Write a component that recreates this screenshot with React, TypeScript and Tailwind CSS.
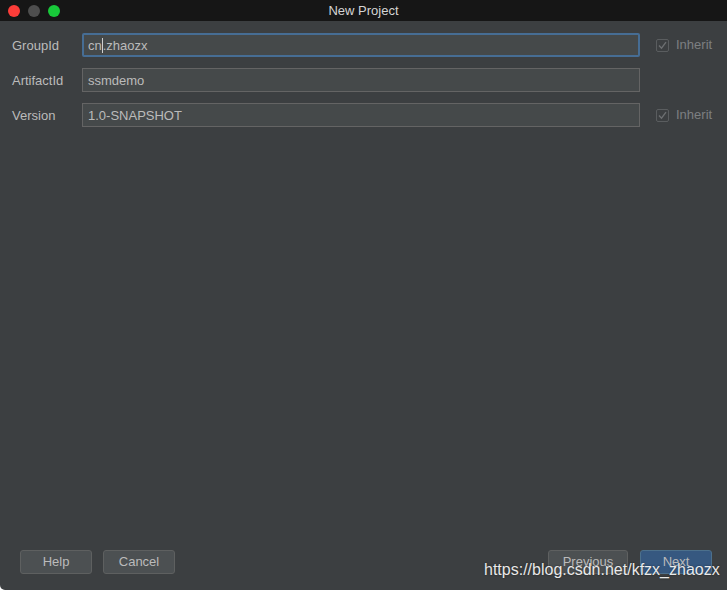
import React from "react";

function Inherit({ show }: { show: boolean }) {
  return (
    <div className="w-[87px] pl-4 flex items-center gap-[7px]">
      {show && (
        <>
          <div className="w-[13px] h-[13px] border border-[#5a5d5f] rounded-[2px] bg-[#3c3f41] flex items-center justify-center">
            <svg width="11" height="11" viewBox="0 0 11 11">
              <path d="M2 5.5 L4.5 8.2 L9 2.2" fill="none" stroke="#6c6f71" strokeWidth="1.4" />
            </svg>
          </div>
          <span className="text-[13px] text-[#7c7f81]">Inherit</span>
        </>
      )}
    </div>
  );
}

function Field({ label, value, focused, inherit }: { label: string; value: React.ReactNode; focused?: boolean; inherit: boolean }) {
  return (
    <div className="flex items-center h-[24px]">
      <div className="w-[70px] text-[13px] text-[#bbbbbb] pt-px">{label}</div>
      <div
        className={
          focused
            ? "flex-1 h-[24px] bg-[#45494a] border-2 border-[#466d94] rounded-[2px] px-[4px] pt-px flex items-center text-[13px] text-[#bbbbbb]"
            : "flex-1 h-[24px] bg-[#45494a] border border-[#646464] px-[5px] pt-px flex items-center text-[13px] text-[#bbbbbb]"
        }
      >
        {value}
      </div>
      <Inherit show={inherit} />
    </div>
  );
}

function Btn({ children, primary }: { children: React.ReactNode; primary?: boolean }) {
  return (
    <div
      className={
        primary
          ? "h-[24px] w-[72px] rounded-[3px] bg-[#365880] border border-[#4c708c] flex items-center justify-center text-[13px] text-[#bbbbbb]"
          : "h-[24px] rounded-[3px] bg-[#4c5052] border border-[#5e6060] flex items-center justify-center text-[13px] text-[#bbbbbb]"
      }
    >
      {children}
    </div>
  );
}

export default function App() {
  return (
    <div className="w-[727px] h-[590px] bg-white" style={{ fontFamily: '"Liberation Sans", Arial, sans-serif' }}>
      <div className="relative w-full h-full flex flex-col bg-[#3c3f41] rounded-bl-[5px] overflow-hidden">
        {/* title bar */}
        <div className="relative h-[21px] bg-[#161616] flex items-center justify-center">
          <div className="absolute left-[8px] top-[5px] flex gap-[8px]">
            <div className="w-[12px] h-[12px] rounded-full bg-[#fc3d39]" />
            <div className="w-[12px] h-[12px] rounded-full bg-[#4e4e4e]" />
            <div className="w-[12px] h-[12px] rounded-full bg-[#18c93a]" />
          </div>
          <span className="text-[13px] text-[#d4d4d4] pt-px">New Project</span>
        </div>

        {/* form */}
        <div className="flex flex-col gap-[11px] pt-[12px] pl-[12px]">
          <Field
            label="GroupId"
            focused
            inherit
            value={
              <span>
                cn<span className="inline-block w-px h-[15px] bg-[#cfcfcf] align-middle -mt-[2px]" />.zhaozx
              </span>
            }
          />
          <Field label="ArtifactId" value="ssmdemo" inherit={false} />
          <Field label="Version" value="1.0-SNAPSHOT" inherit />
        </div>

        <div className="flex-1" />

        {/* buttons */}
        <div className="flex items-center justify-between pl-[20px] pr-[15px] pb-[16px]">
          <div className="flex gap-[11px]">
            <div className="w-[72px]"><Btn>Help</Btn></div>
            <div className="w-[72px]"><Btn>Cancel</Btn></div>
          </div>
          <div className="flex gap-[12px]">
            <div className="w-[80px]"><Btn>Previous</Btn></div>
            <Btn primary>Next</Btn>
          </div>
        </div>

        {/* watermark */}
        <div
          className="absolute left-[484px] top-[562px] text-[16px] text-white/90 leading-none whitespace-nowrap"
          style={{ textShadow: "0 0 2px rgba(0,0,0,0.6)" }}
        >
          https://blog.csdn.net/kfzx_zhaozx
        </div>
      </div>
    </div>
  );
}
